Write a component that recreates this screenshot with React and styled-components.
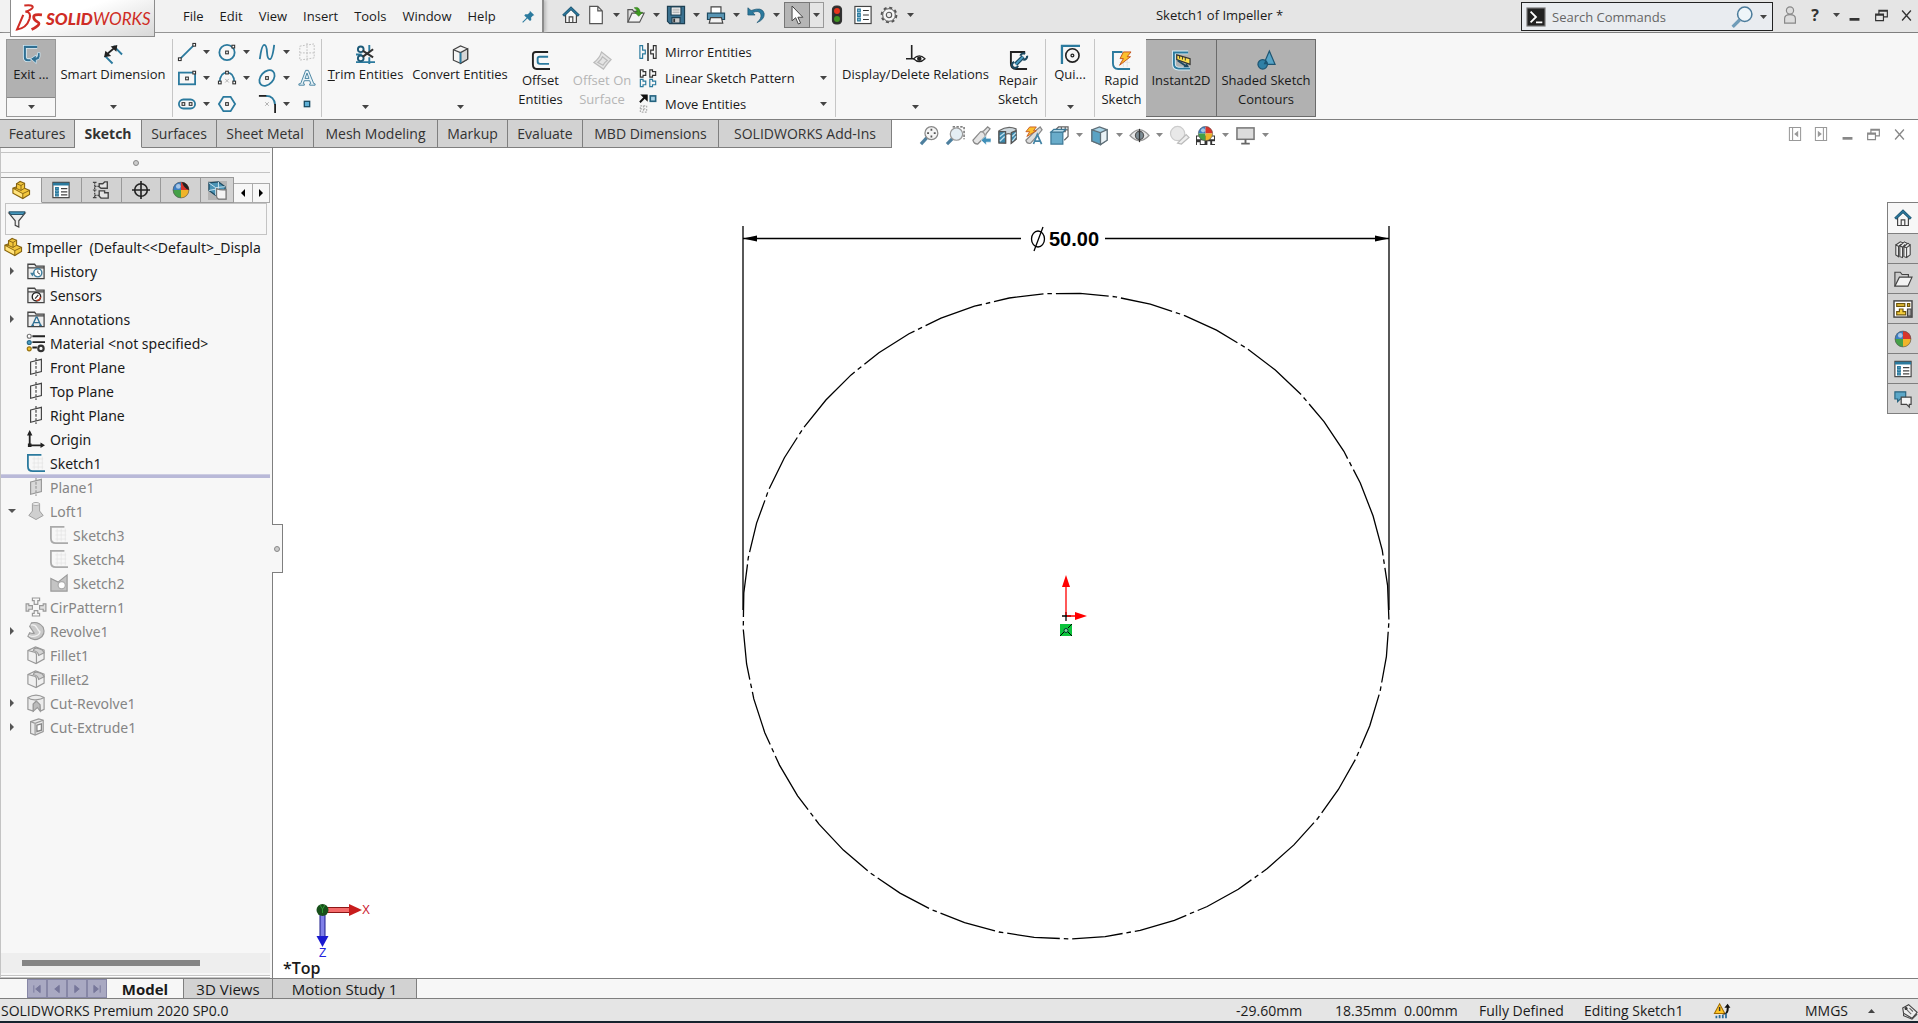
import React, { useState } from "react";
import styled, { createGlobalStyle, css } from "styled-components";

const GlobalStyle = createGlobalStyle`
  * { box-sizing: border-box; }
  body {
    margin: 0;
    background: #fff;
    color: #1a1a1a;
    font-family: "Open Sans", "Noto Sans", sans-serif;
    font-size: 14px;
  }
  button, input {
    font: inherit;
    color: inherit;
    margin: 0;
    padding: 0;
    border: 0;
    background: none;
  }
`;

const BLUE = "#2b7a9e";
const DARK = "#333";

/* ---------- icons ---------- */

const Svg = styled.svg`
    width: ${(p) => p.$w || 20}px;
    height: ${(p) => p.$h || p.$w || 20}px;
    flex: none;
    display: block;
    overflow: visible;
`;

const Icon = ({ w, h, children }) => (
    <Svg $w={w} $h={h} viewBox="0 0 20 20" fill="none" stroke={DARK} strokeWidth="1.3" aria-hidden="true">
        {children}
    </Svg>
);

const Caret = ({ color = "#444", up }) => (
    <Svg $w={7} $h={4} viewBox="0 0 7 4" aria-hidden="true">
        <path d={up ? "M0 4h7L3.5 0z" : "M0 0h7L3.5 4z"} fill={color} />
    </Svg>
);

const Dot = ({ x, y, c = DARK, f = "#fff" }) => (
    <rect x={x - 1.5} y={y - 1.5} width="3" height="3" fill={f} stroke={c} strokeWidth="1.2" />
);

const Globe = () => (
    <>
        <path d="M10 1a9 9 0 0 0-9 9h9z" fill="#3c7fc4" stroke="none" />
        <path d="M10 1a9 9 0 0 1 9 9h-9z" fill="#d8342b" stroke="none" />
        <path d="M1 10a9 9 0 0 0 9 9v-9z" fill="#45a047" stroke="none" />
        <path d="M19 10a9 9 0 0 1-9 9v-9z" fill="#f0b429" stroke="none" />
        <circle cx="7" cy="6" r="2.6" fill="#fff" opacity=".55" stroke="none" />
        <circle cx="10" cy="10" r="8.8" stroke="#555" strokeWidth=".7" />
    </>
);

const House = () => (
    <>
        <path d="M4 9v9.3h12V9L10 3.500z" fill="#f7f7f7" stroke="#444" />
        <path d="M8 18v-6h4v6" stroke="#444" />
        <path d="M1.300 10.800L10 2.500l8.700 8.300" stroke="#1f5673" strokeWidth="3.200" />
        <path d="M1.800 10.200L10 2.600l8.200 7.600" stroke={BLUE} strokeWidth="1.400" />
    </>
);

const Listing = () => (
    <>
        <rect x="1" y="1.500" width="18" height="17" fill="#fff" stroke="#444" />
        <path d="M1 3.500h18" stroke={BLUE} strokeWidth="3" />
        <path d="M10 8.500h7M10 12h7M10 15.500h7" stroke="#444" />
        <path d="M4 7.300h3v2H4zM4 11h3v2H4zM4 14.500h3v2H4z" fill="#8cc4de" stroke={BLUE} />
    </>
);

const PartIcon = () => (
    <>
        <path d="M1 8l4-1.500V3l4-2.500 5 2v5.500l5.500 2.500V15l-7.500 4.500L1 13.500z" fill="#f3c73c" stroke="#856312" strokeWidth="1.200" />
        <path d="M2 9.300l9.300 5v3.700L2 13z" fill="#ffe37f" stroke="none" />
        <path d="M5 3l5 2v5.500L5 8.300zM1 8l4 .3M10 5l4-2.500M10 10.500l4-2.500M1 8l11 6 7.500-3.500M12 14v5" stroke="#856312" strokeWidth="1" />
    </>
);

const Cube = ({ c = "#444", a = "#f4f4f4", b = "#d6d6d6" }) => (
    <>
        <path d="M2.500 5L10 1l7.500 3v11L10 19.300 2.500 16z" fill={a} stroke={c} />
        <path d="M10 8l7.500-4v11L10 19.300z" fill={b} stroke={c} />
        <path d="M2.500 5L10 8" stroke={c} />
    </>
);

const FolderBase = () => (
    <path d="M1 4V2.500h7.500l1.500 2h9V18.500H1z M1 6.500h18" fill="#ededed" stroke="#444" strokeWidth="1.400" />
);

const PlaneShape = ({ c = "#444", f = "none" }) => (
    <>
        <path d="M4 4.500L16 1.500v13.500L4 18z" fill={f} stroke={c} />
        <path d="M10 0v20" stroke={c} strokeDasharray="3 1.500" />
    </>
);

const SketchShape = ({ c = BLUE }) => (
    <>
        <path d="M6 5.500h12M6 10h12M6 14.500h12M8 3v14M12.500 3v14M17 3v14" stroke="#e2e2e2" strokeWidth=".7" />
        <path d="M16 1H1v12.500Q1 19 6.500 19H20" stroke={c} strokeWidth="2" />
    </>
);

const FilletShape = () => (
    <>
        <path d="M1 5l8.500-4 9.500 3.500v10l-9 5-9-4z" fill="#f0f0f0" stroke="#999" />
        <path d="M8 3q3-2 9 1.500l2 3-6 3Q12 5.500 7 5.300z" fill="#d4d4d4" stroke="#999" />
        <path d="M1 5l6 1.500q4 .5 3.500 4.500v8.500" stroke="#999" />
    </>
);

const icons = {
    home: <House />,
    page: <path d="M3 .5h9l5 5v14H3zM12 .5v5h5" fill="#fff" stroke="#555" />,
    open: (
        <>
            <path d="M1 18V4h5l1.500 2H14v3" fill="#ddd" stroke="#555" />
            <path d="M1 18L5.500 8H19l-5 10z" fill="#f3f3f3" stroke="#555" />
            <path d="M8 2q6-2 6.500 5h3L13 11.500 8.500 7h3Q11 3.500 8 2z" fill="#3d9c1f" stroke="#2c7514" strokeWidth=".6" />
        </>
    ),
    save: (
        <>
            <path d="M.5 .5h19v19H3L.5 17z" fill="#3a7190" stroke="#1d3f52" />
            <path d="M4.500 1h11v9h-11z" fill="#fff" stroke="#1d3f52" />
            <path d="M6 3.500h8M6 5.500h8M6 7.500h8" stroke="#999" strokeWidth="1" />
            <path d="M5.500 13h9v6h-9z" fill="#ccc" stroke="#1d3f52" />
            <path d="M8 14v4" strokeWidth="2" />
        </>
    ),
    print: (
        <>
            <path d="M4.500 8V1h11v7" fill="#fff" stroke="#444" />
            <path d="M.5 8h19v7H.5z" fill="#5795b4" stroke="#1d4a61" />
            <path d="M4 13h12l1.500 6h-15z" fill="#f4f4f4" stroke="#444" />
        </>
    ),
    undo: <path d="M1 2v8h8L6.300 7.300q7-3 9 1.500 1.500 5-4.300 9.700 9-3.500 8-10.500Q17 .5 4.500 5z" fill={BLUE} stroke="#1f5673" strokeWidth=".8" />,
    cursor: <path d="M4.500 0v16.500L8.500 13l3 7 2.500-1-3-6.500h5.500z" fill="#fff" stroke="#444" strokeWidth="1.100" />,
    traffic: (
        <>
            <rect x="5" y="0" width="10" height="20" rx="4" fill="#2e2e2e" />
            <circle cx="10" cy="5.500" r="3.300" fill="#e8341c" stroke="none" />
            <circle cx="10" cy="14.500" r="3.300" fill="#3f9422" stroke="none" />
        </>
    ),
    options: (
        <>
            <rect x="1" y=".5" width="18" height="19" fill="#fff" stroke="#444" />
            <path d="M4 3.500h3v3H4zM4 8.500h3v3H4zM4 13.500h3v3H4z" fill="#8cc4de" stroke={BLUE} strokeWidth="1.200" />
            <path d="M10 5h6.500M10 10h6.500M10 15h6.500" />
        </>
    ),
    gear: (
        <>
            <circle cx="10" cy="10" r="8.200" stroke="#555" strokeWidth="2.200" strokeDasharray="3.400 3.040" />
            <circle cx="10" cy="10" r="7" fill="#f7f7f7" stroke="#555" strokeWidth="1.100" />
            <circle cx="10" cy="10" r="3" fill="#eee" stroke="#555" strokeWidth="1.200" />
        </>
    ),
    pin: (
        <>
            <path d="M12 1l7 7-2 .5-3 3 .3 4-2 1.500L3.500 8.500 5 6.500l4 .2 3-3.200z" fill={BLUE} stroke="none" />
            <path d="M8 12l-7 7" stroke={BLUE} strokeWidth="1.600" />
        </>
    ),
    exit: (
        <>
            <path d="M16 2H3v11q0 3 3 3h3" stroke="#d7edf7" strokeWidth="4" />
            <path d="M16 2H3v11q0 3 3 3h3" stroke="#2f6f92" strokeWidth="2.200" />
            <path d="M19 8v4q0 4-4 4v3.500L9 14.500l6-4V13q1.500 0 1.500-5z" fill="#2f6f92" stroke="#d7edf7" strokeWidth=".8" />
        </>
    ),
    smart: (
        <>
            <path d="M1 11.500l8 8M10 1l9 9" stroke={BLUE} strokeWidth="2" />
            <path d="M4 9l7-6" stroke="#222" strokeWidth="2" />
            <path d="M0 13l1.500-7 6 5.500zM14 0l-1 7-6-5.500z" fill="#222" stroke="none" />
        </>
    ),
    line: (
        <>
            <path d="M2 18L18 2" stroke={BLUE} strokeWidth="2" />
            <Dot x={2} y={18} />
            <Dot x={18} y={2} />
        </>
    ),
    circle: (
        <>
            <circle cx="10" cy="10.500" r="8.500" stroke={BLUE} strokeWidth="2" />
            <Dot x={10} y={10.5} />
            <Dot x={17} y={4} />
        </>
    ),
    spline: <path d="M2 18Q4 2 7 2q2.500 0 3 8t3 8Q16 18 18 2" stroke={BLUE} strokeWidth="2" />,
    gridplane: <path d="M2 3.500L18 1v15.500L2 19zM2 11h16M10 0v20" stroke="#bbb" strokeDasharray="2 1.500" strokeWidth="1" />,
    rect: (
        <>
            <rect x="1" y="4" width="18" height="13" stroke={BLUE} strokeWidth="2" />
            <Dot x={10} y={10.5} />
            <Dot x={18} y={4} />
        </>
    ),
    arc: (
        <>
            <path d="M2 15Q2 4 10 4t8 11" stroke={BLUE} strokeWidth="2" />
            <path d="M8 11l4 4M12 11l-4 4" stroke="#aaa" strokeWidth="1" />
            <Dot x={2} y={15} />
            <Dot x={10} y={4} />
            <Dot x={18} y={15} />
        </>
    ),
    ellipse: (
        <>
            <ellipse cx="10" cy="10" rx="10" ry="7" transform="rotate(-48 10 10)" stroke={BLUE} strokeWidth="2" />
            <Dot x={10} y={10} />
        </>
    ),
    text: <path d="M1 18h6v-1.500l-1.200-.3L7 13h6l1.200 3.200-1.200.3V18h6v-1.500l-1.500-.3L11.500 1.500h-3L3 16.200l-2 .3zM7.800 10.500h4.400L10 4.500z" fill="#e8f3f8" stroke="#4e88a4" strokeWidth="1.100" />,
    slot: (
        <>
            <rect x="1" y="5" width="18" height="10" rx="5" stroke={BLUE} strokeWidth="2" />
            <Dot x={6} y={10} />
            <Dot x={14} y={10} />
        </>
    ),
    polygon: (
        <>
            <path d="M6 2h8l5 8-5 8H6l-5-8z" stroke={BLUE} strokeWidth="2" />
            <Dot x={10} y={10} />
        </>
    ),
    fillet: (
        <>
            <path d="M1 1h9" stroke="#222" strokeWidth="2" />
            <path d="M9 1q9 0 10 10" stroke={BLUE} strokeWidth="2" />
            <path d="M19 10v10" stroke="#222" strokeWidth="2" />
            <path d="M8 8l4 4M12 8l-4 4" stroke="#aaa" strokeWidth="1" />
        </>
    ),
    point: <rect x="7" y="7" width="6" height="6" fill="#5fb0d6" stroke="#174961" strokeWidth="1.400" />,
    trim: (
        <>
            <path d="M0 10h6M14 0v7M14 13v7M0 18h20" stroke={BLUE} strokeWidth="2" />
            <circle cx="5" cy="4.500" r="3" stroke="#1d5a78" strokeWidth="2" />
            <circle cx="5" cy="14" r="3" stroke="#1d5a78" strokeWidth="2" />
            <path d="M7 6l11 7M7 12.500l11-8" stroke="#333" strokeWidth="2.200" />
        </>
    ),
    convert: (
        <>
            <Cube />
            <path d="M10 8v11" stroke={BLUE} strokeWidth="2" />
        </>
    ),
    offset: (
        <>
            <path d="M18 1H5Q2 1 2 4v10q0 5 4 5h14" stroke="#222" strokeWidth="2" />
            <path d="M18 6H9Q7 6 7 8v3q0 2.500 2.500 2.500H19" stroke={BLUE} strokeWidth="2" />
        </>
    ),
    offsetSurface: <path d="M1 12Q7 8 9 1l10 8q-3 3-8 10zM5 12q4-3 5-6l5 4q-3 2-4.500 5z" fill="#e4e4e4" stroke="#bbb" />,
    mirror: (
        <>
            <path d="M10 0v20" stroke="#222" strokeWidth="1.600" />
            <path d="M1 3h3v5h3v4H4v5H1z" stroke={BLUE} />
            <path d="M19 3h-3v5h-3v4h3v5h3z" />
        </>
    ),
    linear: (
        <>
            <path d="M1.500 1h3v2h3v4h-3v2h-3zM12 1h3v2h3.500v4H15v2h-3z" />
            <path d="M1.500 11.500h3v2h3v4h-3v2h-3z" stroke={BLUE} />
            <path d="M12 11.500h3v2h3.500v4H15v2h-3z" stroke={BLUE} />
        </>
    ),
    move: (
        <>
            <path d="M1 8l6-6" stroke="#111" strokeWidth="2.200" />
            <path d="M3 0h6v6z" fill="#111" stroke="#111" />
            <rect x="12.500" y="1" width="6" height="6" fill="#a9d3e6" stroke="#25637f" strokeWidth="1.800" />
            <path d="M1.500 12h7v7h-7zM1.500 15.500h7M5 12v7" stroke="#aaa" strokeDasharray="2 1.500" />
        </>
    ),
    relations: (
        <>
            <path d="M6 0v14M0 14.500h9" stroke="#222" strokeWidth="1.700" />
            <path d="M8 14.500q6-6 12 0-6 6-12 0z" fill="#fff" stroke="#222" strokeWidth="1.200" />
            <circle cx="14" cy="14.500" r="2.400" fill="#222" stroke="none" />
        </>
    ),
    repair: (
        <>
            <path d="M17 1H2v12q0 6 5.500 6H19" stroke="#222" strokeWidth="2" />
            <path d="M7 14l8-8" stroke="#1d4a61" strokeWidth="4.500" />
            <path d="M5.500 11.500a3.200 3.200 0 1 0 4 4M12 5a3.400 3.400 0 0 1 5-2M19 5a3.400 3.400 0 0 1-4 4" stroke="#1d4a61" strokeWidth="2.200" />
            <path d="M7 14l8-8" stroke="#4b9cc2" strokeWidth="2" />
        </>
    ),
    quick: (
        <>
            <path d="M1 20V1h19" stroke={BLUE} strokeWidth="2.400" />
            <circle cx="12" cy="11" r="7" stroke="#222" strokeWidth="1.700" />
            <circle cx="12" cy="11" r="1.500" stroke="#222" />
        </>
    ),
    rapid: (
        <>
            <path d="M11 7h8M8 12h11M12 3v14M16 3v14" stroke="#ddd" strokeWidth=".8" />
            <path d="M11 1H1v12q0 6 5.500 6H19" stroke={BLUE} strokeWidth="2" />
            <path d="M12 1h8l-4 5h3.500L8 15l4-7H8.500z" fill="#fbc02d" stroke="#c4521a" strokeWidth="1" />
        </>
    ),
    instant: (
        <>
            <path d="M17 1.500H2v12q0 5 5 5h12" stroke="#d7edf7" strokeWidth="4" />
            <path d="M17 1.500H2v12q0 5 5 5h12" stroke={BLUE} strokeWidth="2" />
            <path d="M5 4l14 4v6L5 9z" fill="#ffe14d" stroke="#333" />
            <path d="M8 5v3M11 6v3M14 7v3" stroke="#333" strokeWidth="1" />
            <path d="M6 10l9 6" stroke="#1d4a61" strokeWidth="1.800" />
            <path d="M18 17h-6l3.500-4z" fill="#1d4a61" stroke="none" />
        </>
    ),
    shaded: (
        <>
            <path d="M13 0l6 14H7z" fill="#56a3c6" stroke="#1f5673" />
            <circle cx="6" cy="14" r="5" fill="#2f80a6" stroke="#1f5673" />
            <path d="M9 9.500L7 14h4q0-3-2-4.500z" fill="#1b5674" stroke="none" />
        </>
    ),
    zoomFit: (
        <>
            <path d="M1 19l6-6.500" stroke="#4d7f9e" strokeWidth="3.400" />
            <circle cx="12" cy="7.500" r="6.800" fill="#f4f4f4" stroke="#888" />
            <path d="M12 3v2M12 10v2M7.500 7.500h2M14.500 7.500h2" stroke="#555" strokeWidth="1.800" />
        </>
    ),
    zoomArea: (
        <>
            <path d="M7 1h12v13" stroke="#555" strokeDasharray="2.500 1.500" />
            <path d="M1 19l6-6" stroke="#4d7f9e" strokeWidth="3.400" />
            <circle cx="11" cy="8.500" r="6.500" fill="#e4eef4" stroke="#999" />
        </>
    ),
    prevView: (
        <>
            <path d="M1 15l8-9 3-.5L16.500 1l2.500 2-4 5-1 3-8 8q-4 0-5-4z" fill="#e4e4e4" stroke="#888" />
            <path d="M9 6q4 0 5 5" stroke="#999" />
            <path d="M9.500 15l5.500-5v3h5v4h-5v3z" fill="#3f8fb8" stroke="#fff" strokeWidth=".6" />
        </>
    ),
    section: (
        <>
            <path d="M1 5q9-6 18-2v11l-5 4V9q-3-2-6 0v9l-7-1z" fill="#cfd8dd" stroke="#666" />
            <path d="M1 6h7v12H1zM14 7l5-2v9l-5 4z" fill="#3c87aa" stroke="#555" />
            <path d="M2 11l5-4M2 16l5-5M15 11l4-4M15 16l4-5" stroke="#bfe0ef" />
        </>
    ),
    dynamic: (
        <>
            <path d="M2 15l10-10 5-4 2 3-4 5-8 9q-4 1-5-3z" fill="#ddd" stroke="#888" />
            <path d="M6 1h7l-3 4h3L3 11l3-5H2z" fill="#fbc02d" stroke="#c4521a" strokeWidth=".9" />
            <path d="M10 19l4-10 4.500 10M11.500 16h5.500" stroke="#4585a6" strokeWidth="1.800" />
        </>
    ),
    orient: (
        <>
            <path d="M6 4l3-3h10v10l-4 4M6 6h10V1M12 1v6M16 4h3" stroke="#666" />
            <path d="M1 6.500h12.500V19H1z" fill="#69acca" stroke="#3c7896" />
            <path d="M1 6.500l3-3h12.500l-3 3z" fill="#b5d9e8" stroke="#3c7896" />
        </>
    ),
    display: (
        <>
            <path d="M2 4l8-3 8 3v11l-7 4.500L2 16z" fill="#a8d3e6" stroke="#5f6f78" />
            <path d="M11 7l7-3v11l-7 4.500z" fill="#e9f2f6" stroke="#5f6f78" />
            <path d="M2 4l9 3v12.500L2 16z" fill="#5ba3c4" stroke="#5f6f78" />
        </>
    ),
    hide: (
        <>
            <path d="M0 10q10-12 20 0-10 11-20 0z" fill="#e9e9e9" stroke="#999" />
            <circle cx="10" cy="10" r="4.300" fill="#7d8c94" stroke="#555" />
            <path d="M10 3v14" stroke="#333" />
        </>
    ),
    appearance: (
        <>
            <circle cx="8" cy="8" r="7.500" fill="#e8e8e8" stroke="#ccc" />
            <path d="M8 18l9-9 3 3-8 7z" fill="#eee" stroke="#bbb" />
        </>
    ),
    scene: (
        <>
            <path d="M0 10h20v10H0z" fill="#333" stroke="none" />
            <path d="M1 11h4v3H1zM15 11h4v3h-4zM5 15h4v4H5zM12 16h3v4h-3zM1 17h3v3H1zM17 16h3v3h-3z" fill="#fff" stroke="none" />
            <g transform="translate(1.500 -.5) scale(.85)">
                <Globe />
            </g>
        </>
    ),
    monitor: (
        <>
            <rect x="1" y="2" width="18" height="12" fill="#dcdcdc" stroke="#777" strokeWidth="1.600" />
            <path d="M10 14v4M5.500 18.500h9" stroke="#666" strokeWidth="2" />
        </>
    ),
    prevPane: (
        <>
            <path d="M3 2h14v16H3zM7 2v16" stroke="#999" />
            <path d="M14 6v8l-5-4z" fill="#999" stroke="none" />
        </>
    ),
    nextPane: (
        <>
            <path d="M3 2h14v16H3zM13 2v16" stroke="#999" />
            <path d="M6 6v8l5-4z" fill="#999" stroke="none" />
        </>
    ),
    minimize: <path d="M1 17h18" stroke="currentColor" strokeWidth="5" />,
    restore: <path d="M1 8h12v10H1zM1 9.500h12M6 7V2h13v10h-6M6 3.500h13" stroke="currentColor" strokeWidth="1.800" />,
    close: <path d="M2 1l16 18M18 1L2 19" stroke="currentColor" strokeWidth="2.400" />,
    command: (
        <>
            <rect x="0" y="0" width="20" height="20" fill="#222" stroke="#777" />
            <path d="M4 4l6 6-6 6M10 16h7" stroke="#fff" strokeWidth="2" />
        </>
    ),
    search: (
        <>
            <circle cx="12.500" cy="7.500" r="6.500" fill="#eef5f9" stroke="#4c7c9b" strokeWidth="1.400" />
            <path d="M8 12.500l-6.500 6.500" stroke="#6f9cb8" strokeWidth="3" />
        </>
    ),
    user: (
        <>
            <circle cx="10" cy="5" r="4" fill="#ddd" stroke="#888" />
            <path d="M4 19v-5q0-4.500 6-4.500t6 4.500v5z" fill="#ddd" stroke="#888" />
        </>
    ),
    part: <PartIcon />,
    props: <Listing />,
    config: (
        <>
            <path d="M3 1v18M3 6h5M3 16h5" stroke="#444" strokeWidth="1.400" strokeDasharray="2 1" />
            <path d="M8 3h4l2-2h3v7h-7l-2-1.500zM8 11h6v2h4v6h-8l-2-2z" fill="#e4e4e4" stroke="#444" strokeWidth="1.500" />
            <path d="M1 1.500h4M1 10h4M1 18.500h4" stroke="#444" />
        </>
    ),
    target: (
        <>
            <circle cx="10" cy="10" r="7" stroke="#222" strokeWidth="1.800" />
            <path d="M10 0v20M0 10h20" stroke="#222" strokeWidth="1.800" />
        </>
    ),
    globe: <Globe />,
    globePen: (
        <>
            <Globe />
            <path d="M11 1q7 1 8 9-6-2-8-9z" fill="#222" stroke="none" />
        </>
    ),
    dispPane: (
        <>
            <path d="M0 0h20v20H0z" fill="#b4b4b4" stroke="none" />
            <path d="M1 2l10-1 7 5v8L8 15 1 10z" fill="#4a93b5" stroke="#1d4a61" />
            <path d="M1 2l7 5 10-1M8 7v8M11 1v7L1 10M11 8l7 6" stroke="#cfe6f0" strokeWidth="1" />
            <path d="M9 8q5 2 10 1v10h-8q-2-1-2-3z" fill="#f4f4f4" stroke="#777" />
        </>
    ),
    filter: (
        <>
            <path d="M1 3.500h18L12 12v7l-4-2v-5z" fill="#eee" stroke="#444" />
            <path d="M1 2h18l-2 3H3z" fill="#4597bb" stroke="#1d4a61" strokeWidth="1" />
        </>
    ),
    history: (
        <>
            <FolderBase />
            <circle cx="12" cy="12" r="4.500" fill="#fff" stroke="#3f7e9e" strokeWidth="1.600" />
            <path d="M12 9.500V12l2.500 1.500" strokeWidth="1" />
            <path d="M3.500 12h5L6 16z" fill="#3f7e9e" stroke="none" />
        </>
    ),
    sensors: (
        <>
            <FolderBase />
            <circle cx="10.500" cy="12" r="4.700" fill="#fff" stroke="#222" strokeWidth="1.500" />
            <path d="M9 14l3.500-4" strokeWidth="1.300" />
            <path d="M10.500 16q4 0 4.500-4" stroke="#c33d20" strokeWidth="1.600" />
        </>
    ),
    annotations: (
        <>
            <FolderBase />
            <path d="M6 17l4.200-9h1l4 9M8 14h5.500M4.800 17h3M13.500 17h3" stroke="#2f6f92" strokeWidth="1.500" />
        </>
    ),
    material: (
        <>
            <path d="M6 2.500h14M6 9h14M6 15h5" stroke="#222" strokeWidth="2" />
            <circle cx="2.500" cy="2.500" r="2.200" fill="#fff" stroke="#777" />
            <circle cx="2.500" cy="9.500" r="2.200" fill="#4e9fc4" stroke="#2b6b8b" />
            <circle cx="2.500" cy="16.500" r="2.200" fill="#f0c22f" stroke="#9a7410" />
            <circle cx="15.500" cy="16" r="3" stroke="#333" strokeWidth="2.400" />
        </>
    ),
    plane: <PlaneShape />,
    origin: (
        <>
            <path d="M3 3v14h14" stroke="#222" strokeWidth="2" />
            <path d="M0 6l3-6 3 6zM15 14l5 3-5 3zM1 15h4v4H1z" fill="#222" stroke="none" />
        </>
    ),
    sketch: <SketchShape />,
    planeOff: <PlaneShape c="#999" f="#d9d9d9" />,
    loftOff: (
        <>
            <path d="M6 2q4-2.500 8 0v8l4 5-8 4.500L2 15l4-5z" fill="#cfcfcf" stroke="#999" strokeWidth="1" />
            <ellipse cx="10" cy="2.200" rx="4" ry="1.700" fill="#eee" stroke="#999" strokeWidth=".8" />
        </>
    ),
    sketchOff: <SketchShape c="#aaa" />,
    sketchFilled: (
        <>
            <path d="M1 5l8 4 10-8v18H1z" fill="#c4c4c4" stroke="#999" />
            <circle cx="13" cy="12.500" r="4" fill="#fff" stroke="#aaa" />
        </>
    ),
    circOff: (
        <>
            <path d="M6 0h8v3h-2v4H8V3H6zM6 20h8v-3h-2v-3H8v3H6z" stroke="#999" />
            <path d="M-1 6.500h3v2h4v4H2v2h-3zM21 6.500h-3v2h-4v4h4v2h3z" fill="#e0e0e0" stroke="#999" />
        </>
    ),
    revolveOff: (
        <>
            <path d="M5 1q8-2 13 5 3 8-4 12-7 4-13-2l2-4q3 1 5 .500L3 5z" fill="#c9c9c9" stroke="#999" />
            <path d="M4 3.500q5-1 7 3t4 5M2 15q5 2 9 0t3-5" stroke="#f0f0f0" strokeWidth="1.400" />
        </>
    ),
    filletOff: <FilletShape />,
    cutRevOff: (
        <>
            <path d="M1 4q9-5.500 18 0v13l-4 2-1-7-4-4-3 3v8l-6-2z" fill="#ececec" stroke="#999" />
            <path d="M7 19v-8l3.500-3 4 4v7l-3-4z" fill="#bbb" stroke="#999" />
            <path d="M1 4q3 3 9 2.500T19 4" stroke="#999" />
        </>
    ),
    cutExtOff: (
        <>
            <path d="M4 4l9-3 5 1.500V15l-9 4-5-2z" fill="#eaeaea" stroke="#999" />
            <path d="M4 4l5 2 9-3.500M9 6v13" stroke="#999" />
            <path d="M11 8l5-1.500v7L11 15z" fill="#fff" stroke="#888" strokeWidth="1.500" />
        </>
    ),
    library: (
        <>
            <path d="M2 6l5-4 5-1 6 3v12l-6 4-5-1-5-3z" fill="#f0f0f0" stroke="none" />
            <path d="M2 5.500l3 1.500v11.500l-3-2zM6.500 6.500l3 1.500v11.500l-3-1zM11 7.500l3 1v11l-3-1zM14 8.500l4-3v11l-4 3M2 5.500L7 2l3 1M6.500 6.500L11.500 2l3 1.500M11 7.500L15.500 3.500l2.500 2M5 7l3-2.500M9.500 8l3-3" stroke="#444" strokeWidth="1.200" />
        </>
    ),
    folder: (
        <>
            <path d="M1 18V2.500h6l2 2.500h7v3" fill="#ccc" stroke="#444" />
            <path d="M1 18L6 8h14l-4.500 10z" fill="#f3f3f3" stroke="#444" />
        </>
    ),
    palette: (
        <>
            <rect x="0" y="1" width="20" height="18" fill="#fff" stroke="#444" strokeWidth="1.600" />
            <path d="M3 4h9v3H3zM15 4h2.500v3H15zM6 10h4v3h3v3.500H3V13h3z" fill="#f4cd3c" stroke="#6e560c" />
            <path d="M15 10h4v8h-4z" fill="#aaa" stroke="#444" />
        </>
    ),
    forum: (
        <>
            <path d="M1 2h12v8H7l-3 3v-3H1z" fill="#5ba7c8" stroke="#2a6580" />
            <path d="M8 8h11v8h-2v3l-3-3H8z" fill="#f5f5f5" stroke="#444" />
        </>
    ),
    warn: (
        <>
            <path d="M7 1l6.500 12H.5z" fill="#ffc629" stroke="#a06c00" />
            <path d="M7 5v5" strokeWidth="1.800" />
            <path d="M10 14q6 0 6-8h-3l4-5 3.500 5h-2q0 10-8.500 8z" fill="#111" stroke="none" />
            <path d="M3 19v-3M7 19v-4M11 19v-4M15 19v-6" stroke="#2b6b9a" strokeWidth="2.200" />
        </>
    ),
    tag: (
        <>
            <path d="M2 6l7-4 10 9-6 7-10-6z" fill="#eee" stroke="#444" />
            <path d="M3 12v3l10 4 6-6" stroke="#444" />
            <path d="M7 8l5 5M10 6l4 4" stroke="#666" />
            <circle cx="6" cy="6.500" r="1.200" fill="#444" />
        </>
    ),
};

const Glyph = ({ name, w }) => <Icon w={w}>{icons[name]}</Icon>;

/* ---------- header ---------- */

const Page = styled.div`
    min-height: 100vh;
    display: flex;
    flex-direction: column;
`;

const Header = styled.header`
    display: flex;
    height: 33px;
    background: #e5e5e5;
    border-bottom: 1px solid #7f7f7f;
    font-size: 13px;
`;

const MenuArea = styled.div`
    display: flex;
    align-items: center;
    width: 544px;
    padding-left: 10px;
    background: #f2f2f2;
    border-right: 2px solid #8c8c8c;
    box-shadow: 2px 0 3px #bbb;
`;

const Logo = styled.div`
    position: relative;
    z-index: 2;
    align-self: flex-start;
    display: flex;
    align-items: center;
    gap: 3px;
    width: 145px;
    height: 37px;
    padding-left: 5px;
    border: 1px solid #8c8c8c;
    border-top: 0;
    background: linear-gradient(160deg, #fff 40%, #d8d8d8);
    color: #cf2c25;
    font-family: Lato, "Open Sans", sans-serif;
    font-style: italic;
    font-size: 17px;
    b { font-weight: 900; }
`;

const Menu = styled.nav`
    display: flex;
    flex: 1;
    margin-left: 20px;
`;

const MenuItem = styled.button`
    padding: 0 8px;
    line-height: 28px;
`;

const QuickBar = styled.div`
    display: flex;
    align-items: center;
    margin: 0 0 2px 14px;
`;

const ToolButton = styled.button`
    display: flex;
    align-items: center;
    justify-content: center;
    width: ${(p) => p.$w || 24}px;
    height: 26px;
    ${(p) => p.$pressed && css`
        background: #b5b5b5;
        border: 1px solid #777;
    `}
    ${(p) => p.$outlined && css`
        border: 1px solid #999;
        border-left: 0;
    `}
`;

const Title = styled.div`
    flex: 1;
    text-align: center;
    line-height: 30px;
`;

const SearchBox = styled.div`
    display: flex;
    align-items: center;
    gap: 7px;
    width: 252px;
    height: 29px;
    margin: 2px 8px 0 0;
    padding: 0 5px;
    border: 1px solid #222;
    background: #e9ecf0;
`;

const SearchInput = styled.input`
    flex: 1;
    min-width: 0;
    outline: 0;
    &::placeholder { color: #666; opacity: 1; }
`;

const WindowButtons = styled.div`
    display: flex;
    align-items: center;
    margin-bottom: 2px;
    color: #333;
    b { font-size: 16px; }
`;

const quickTools = [
    { icon: "home", label: "Home", w: 26 },
    { icon: "page", label: "New", caret: true },
    { icon: "open", label: "Open", caret: true },
    { icon: "save", label: "Save", caret: true },
    { icon: "print", label: "Print", caret: true },
    { icon: "undo", label: "Undo", caret: true },
    { icon: "cursor", label: "Select", caret: true, pressed: true, w: 26 },
    { icon: "traffic", label: "Rebuild", w: 26 },
    { icon: "options", label: "File properties", w: 26 },
    { icon: "gear", label: "Options", caret: true, w: 26 },
];

const TopBar = () => {
    const [query, setQuery] = useState("");

    return (
        <Header>
            <MenuArea>
                <Logo>
                    <Svg $w={27} $h={28} viewBox="0 0 26 26" fill="none" stroke="#cf2c25" strokeWidth="2" aria-hidden="true">
                        <path d="M8 1q9-1 8 2-1 2-7 4M9 7q6 0 4 7Q10 23 1 24l6-14" />
                        <path d="M25 10q-8-1-8 2t4 5-6 7" strokeWidth="2.600" />
                    </Svg>
                    <span><b>SOLID</b>WORKS</span>
                </Logo>
                <Menu>
                    {["File", "Edit", "View", "Insert", "Tools", "Window", "Help"].map((m) => (
                        <MenuItem key={m}>{m}</MenuItem>
                    ))}
                </Menu>
                <ToolButton $w={28} aria-label="Pin menu"><Glyph name="pin" w={13} /></ToolButton>
            </MenuArea>
            <QuickBar>
                {quickTools.map((t) => (
                    <React.Fragment key={t.icon}>
                        <ToolButton $w={t.w} $pressed={t.pressed} aria-label={t.label}>
                            <Glyph name={t.icon} w={18} />
                        </ToolButton>
                        {t.caret && (
                            <ToolButton $w={t.pressed ? 14 : 16} $outlined={t.pressed} aria-label={t.label + " menu"}>
                                <Caret />
                            </ToolButton>
                        )}
                    </React.Fragment>
                ))}
            </QuickBar>
            <Title>Sketch1 of Impeller *</Title>
            <SearchBox>
                <Glyph name="command" w={18} />
                <SearchInput
                    type="text"
                    aria-label="Search Commands"
                    placeholder="Search Commands"
                    value={query}
                    onChange={(e) => setQuery(e.target.value)}
                />
                <Glyph name="search" w={22} />
                <Caret />
            </SearchBox>
            <WindowButtons>
                <ToolButton $w={18} aria-label="Sign in"><Glyph name="user" w={18} /></ToolButton>
                <ToolButton $w={32} aria-label="Help"><b>?</b></ToolButton>
                <ToolButton $w={10} aria-label="Help menu"><Caret /></ToolButton>
                <ToolButton $w={26} aria-label="Minimize"><Glyph name="minimize" w={11} /></ToolButton>
                <ToolButton $w={28} aria-label="Restore"><Glyph name="restore" w={13} /></ToolButton>
                <ToolButton $w={23} aria-label="Close"><Glyph name="close" w={11} /></ToolButton>
            </WindowButtons>
        </Header>
    );
};

/* ---------- ribbon ---------- */

const Ribbon = styled.div`
    display: flex;
    height: 87px;
    padding: 6px;
    padding-bottom: 2px;
    background: #f7f7f7;
    border-bottom: 1px solid #7f7f7f;
    font-size: 13px;
`;

const RibbonButton = styled.button`
    display: flex;
    flex-direction: column;
    align-items: center;
    width: ${(p) => p.$w}px;
    height: 78px;
    padding-top: ${(p) => (p.$two ? 12 : 6)}px;
    line-height: 19px;
    color: ${(p) => (p.disabled ? "#b5b5b5" : "#1a1a1a")};
    span {
        margin-top: 1px;
        white-space: nowrap;
    }
    ${(p) => p.$active && css`
        background: #b1b1b1;
        border: 1px solid #6b6b6b;
        padding-top: 11px;
        & + & { border-left: 0; }
    `}
`;

const CaretSlot = styled.i`
    display: flex;
    align-items: center;
    flex: 1;
    padding-top: 12px;
`;

const ExitGroup = styled.div`
    width: 50px;
    height: 78px;
    display: flex;
    flex-direction: column;
    border: 1px solid #999;
`;

const ExitButton = styled.button`
    flex: 1;
    display: flex;
    flex-direction: column;
    align-items: center;
    padding-top: 5px;
    line-height: 19px;
    background: #b1b1b1;
    span { margin-top: 1px; }
`;

const ExitCaret = styled.button`
    display: flex;
    align-items: center;
    justify-content: center;
    height: 19px;
    border-top: 1px solid #888;
`;

const Divider = styled.div`
    width: 1px;
    height: 78px;
    margin: 0 2px;
    background: #c6c6c6;
`;

const SketchGrid = styled.div`
    display: grid;
    grid-template-columns: 40px 40px 40px 24px;
    grid-auto-rows: 26px;
`;

const SketchCell = styled.div`
    display: flex;
`;

const RowTools = styled.div`
    display: flex;
    flex-direction: column;
    width: 197px;
`;

const RowTool = styled.div`
    display: flex;
    align-items: center;
    height: 26px;
`;

const RowButton = styled.button`
    display: flex;
    align-items: center;
    gap: 8px;
    flex: 1;
    padding-left: 3px;
`;

const sketchTools = [
    ["line", "Line", true], ["circle", "Circle", true], ["spline", "Spline", true], ["gridplane", "Plane"],
    ["rect", "Rectangle", true], ["arc", "Arc", true], ["ellipse", "Ellipse", true], ["text", "Text"],
    ["slot", "Slot", true], ["polygon", "Polygon"], ["fillet", "Fillet", true], ["point", "Point"],
];

const BigTool = ({ icon, w, children, two, caret, ...rest }) => (
    <RibbonButton $w={w} $two={two} {...rest}>
        <Glyph name={icon} w={19} />
        <span>{children}</span>
        {caret && <CaretSlot><Caret /></CaretSlot>}
    </RibbonButton>
);

const CommandManager = () => (
    <Ribbon>
        <ExitGroup>
            <ExitButton><Glyph name="exit" w={19} /><span>Exit ...</span></ExitButton>
            <ExitCaret aria-label="Exit menu"><Caret /></ExitCaret>
        </ExitGroup>
        <BigTool icon="smart" w={114} caret>Smart Dimension</BigTool>
        <Divider />
        <SketchGrid>
            {sketchTools.map(([icon, label, caret]) => (
                <SketchCell key={icon}>
                    <ToolButton aria-label={label}><Glyph name={icon} w={18} /></ToolButton>
                    {caret && <ToolButton $w={15} aria-label={label + " menu"}><Caret /></ToolButton>}
                </SketchCell>
            ))}
        </SketchGrid>
        <Divider />
        <BigTool icon="trim" w={83} caret><u>T</u>rim Entities</BigTool>
        <BigTool icon="convert" w={106} caret>Convert Entities</BigTool>
        <BigTool icon="offset" w={55} two>Offset<br />Entities</BigTool>
        <BigTool icon="offsetSurface" w={68} two disabled>Offset On<br />Surface</BigTool>
        <RowTools>
            <RowTool><RowButton><Glyph name="mirror" w={18} />Mirror Entities</RowButton></RowTool>
            <RowTool>
                <RowButton><Glyph name="linear" w={18} />Linear Sketch Pattern</RowButton>
                <ToolButton $w={20} aria-label="Pattern menu"><Caret /></ToolButton>
            </RowTool>
            <RowTool>
                <RowButton><Glyph name="move" w={18} />Move Entities</RowButton>
                <ToolButton $w={20} aria-label="Move menu"><Caret /></ToolButton>
            </RowTool>
        </RowTools>
        <Divider />
        <BigTool icon="relations" w={155} caret>Display/Delete Relations</BigTool>
        <BigTool icon="repair" w={50} two>Repair<br />Sketch</BigTool>
        <Divider />
        <BigTool icon="quick" w={44} caret>Qui...</BigTool>
        <Divider />
        <BigTool icon="rapid" w={49} two>Rapid<br />Sketch</BigTool>
        <BigTool icon="instant" w={71} two $active>Instant2D</BigTool>
        <BigTool icon="shaded" w={99} two $active>Shaded Sketch<br />Contours</BigTool>
    </Ribbon>
);

/* ---------- tabs and view toolbar ---------- */

const TabStrip = styled.div`
    display: flex;
    align-items: center;
    height: 28px;
`;

const Tab = styled.button`
    align-self: stretch;
    width: ${(p) => p.$w}px;
    line-height: 24px;
    white-space: nowrap;
    color: #333;
    background: ${(p) => (p.$on ? "#f7f7f7" : "#d2d2d2")};
    font-weight: ${(p) => (p.$on ? 700 : 400)};
    border-right: 1px solid #7f7f7f;
    border-bottom: 1px solid ${(p) => (p.$on ? "#f7f7f7" : "#7f7f7f")};
    ${(p) => p.$bottom && css`
        font-size: 15px;
        line-height: 18px;
        color: #1a1a1a;
        border-bottom: 0;
    `}
`;

const ViewTools = styled.div`
    display: flex;
    align-items: center;
    flex: 1;
    margin: 2px 0 0 24px;
`;

const PaneButtons = styled.div`
    display: flex;
    color: #888;
    margin-right: 6px;
`;

const tabs = [
    ["Features", 75], ["Sketch", 67], ["Surfaces", 75], ["Sheet Metal", 97], ["Mesh Modeling", 124],
    ["Markup", 70], ["Evaluate", 75], ["MBD Dimensions", 136], ["SOLIDWORKS Add-Ins", 173],
];

const viewTools = [
    ["zoomFit", "Zoom to fit"], ["zoomArea", "Zoom to area"], ["prevView", "Previous view"], ["section", "Section view"],
    ["dynamic", "Annotation views"], ["orient", "View orientation", true], ["display", "Display style", true],
    ["hide", "Hide or show items", true], ["appearance", "Edit appearance"], ["scene", "Apply scene", true],
    ["monitor", "View settings", true],
];

const Tabs = () => (
    <TabStrip>
        {tabs.map(([name, w]) => (
            <Tab key={name} $w={w} $on={name === "Sketch"}>{name}</Tab>
        ))}
        <ViewTools>
            {viewTools.map(([icon, label, caret]) => (
                <React.Fragment key={icon}>
                    <ToolButton $w={26} aria-label={label}><Glyph name={icon} w={19} /></ToolButton>
                    {caret && <ToolButton $w={14} aria-label={label + " menu"}><Caret color="#888" /></ToolButton>}
                </React.Fragment>
            ))}
        </ViewTools>
        <PaneButtons>
            <ToolButton $w={26} aria-label="Previous pane"><Glyph name="prevPane" w={16} /></ToolButton>
            <ToolButton $w={26} aria-label="Next pane"><Glyph name="nextPane" w={16} /></ToolButton>
            <ToolButton $w={26} aria-label="Minimize document"><Glyph name="minimize" w={11} /></ToolButton>
            <ToolButton $w={26} aria-label="Restore document"><Glyph name="restore" w={13} /></ToolButton>
            <ToolButton $w={26} aria-label="Close document"><Glyph name="close" w={11} /></ToolButton>
        </PaneButtons>
    </TabStrip>
);

/* ---------- feature tree ---------- */

const Workspace = styled.div`
    flex: 1;
    display: flex;
    min-height: 0;
`;

const SidePanel = styled.aside`
    position: relative;
    display: flex;
    flex-direction: column;
    width: 273px;
    padding-right: 2px;
    background: #f7f7f7;
    border-left: 1px solid #c4c4c4;
    border-right: 1px solid #7f7f7f;
`;

const Grip = styled.div`
    display: flex;
    align-items: center;
    justify-content: center;
    height: 21px;
    margin-top: 4px;
    border-top: 1px solid #c4c4c4;
    border-bottom: 1px solid #c4c4c4;
`;

const GripDot = styled.span`
    width: 6px;
    height: 6px;
    border: 1px solid #888;
    border-radius: 50%;
    background: #ccc;
`;

const PanelTabs = styled.div`
    display: flex;
    height: 26px;
    margin-top: 4px;
    overflow: hidden;
`;

const PanelTab = styled.button`
    display: flex;
    align-items: center;
    justify-content: center;
    width: ${(p) => p.$w || 40}px;
    background: ${(p) => (p.$on ? "#f7f7f7" : "#d2d2d2")};
    border: 1px solid #999;
    border-left: 0;
    ${(p) => p.$on && css`border-bottom-color: #f7f7f7;`}
`;

const ScrollButton = styled.button`
    display: flex;
    align-items: center;
    justify-content: center;
    align-self: flex-end;
    width: ${(p) => p.$w}px;
    height: 20px;
    background: #f7f7f7;
    border: 1px solid #aaa;
    border-left: 0;
`;

const FilterBox = styled.label`
    display: flex;
    align-items: center;
    height: 32px;
    margin: 0 3px 0 4px;
    padding-left: 2px;
    border: 1px solid #c4c4c4;
    input {
        flex: 1;
        min-width: 0;
        outline: 0;
    }
`;

const Tree = styled.ul`
    flex: 1;
    list-style: none;
    margin: 0;
    padding: 0;
    overflow: hidden;
    font-family: "Noto Sans", "Open Sans", sans-serif;
`;

const TreeRow = styled.li`
    display: flex;
    align-items: center;
    gap: 5px;
    height: 24px;
    padding-left: ${(p) => [3, 6, 29][p.$level]}px;
    white-space: pre;
    color: ${(p) => (p.$off ? "#858585" : "#1a1a1a")};
`;

const Toggle = styled.button`
    display: flex;
    align-items: center;
    justify-content: center;
    width: 10px;
    height: 16px;
    margin-right: 5px;
`;

const Rollback = styled.li`
    height: 4px;
    margin: -1px 0 -3px;
    background: #b9b9d8;
    border-top: 1px solid #cdcde2;
`;

const ScrollTrack = styled.div`
    height: 20px;
    padding: 7px 0 7px 21px;
    margin-bottom: 2px;
    background: #eeeeee;
`;

const ScrollThumb = styled.div`
    width: 178px;
    height: 6px;
    background: #858585;
`;

const PanelFoot = styled.div`
    height: 3px;
    border-top: 1px solid #c4c4c4;
    border-bottom: 1px solid #c4c4c4;
    background: #fff;
`;

/* handle that hangs off the right edge of the panel */
const Handle = styled.button`
    position: absolute;
    left: 100%;
    top: 376px;
    z-index: 1;
    display: flex;
    align-items: center;
    justify-content: center;
    width: 11px;
    height: 49px;
    background: #f7f7f7;
    border: 1px solid #7f7f7f;
    border-left: 0;
`;

const features = [
    { name: "History", icon: "history", open: false },
    { name: "Sensors", icon: "sensors" },
    { name: "Annotations", icon: "annotations", open: false },
    { name: "Material <not specified>", icon: "material" },
    { name: "Front Plane", icon: "plane" },
    { name: "Top Plane", icon: "plane" },
    { name: "Right Plane", icon: "plane" },
    { name: "Origin", icon: "origin" },
    { name: "Sketch1", icon: "sketch" },
    { rollback: true },
    { name: "Plane1", icon: "planeOff", off: true },
    { name: "Loft1", icon: "loftOff", off: true, open: true },
    { name: "Sketch3", icon: "sketchOff", off: true, level: 2 },
    { name: "Sketch4", icon: "sketchOff", off: true, level: 2 },
    { name: "Sketch2", icon: "sketchFilled", off: true, level: 2 },
    { name: "CirPattern1", icon: "circOff", off: true },
    { name: "Revolve1", icon: "revolveOff", off: true, open: false },
    { name: "Fillet1", icon: "filletOff", off: true },
    { name: "Fillet2", icon: "filletOff", off: true },
    { name: "Cut-Revolve1", icon: "cutRevOff", off: true, open: false },
    { name: "Cut-Extrude1", icon: "cutExtOff", off: true, open: false },
];

const Arrow = ({ open }) => (
    <Svg $w={8} $h={8} viewBox="0 0 8 8" fill="#555" aria-hidden="true">
        <path d={open ? "M0 2h8L4 6z" : "M2 0l4 4-4 4z"} />
    </Svg>
);

const FeatureTree = () => {
    const [filter, setFilter] = useState("");

    return (
        <SidePanel>
            <Grip><GripDot /></Grip>
            <PanelTabs>
                <PanelTab $w={41} $on aria-label="Feature tree"><Glyph name="part" w={18} /></PanelTab>
                <PanelTab aria-label="Properties"><Glyph name="props" w={18} /></PanelTab>
                <PanelTab aria-label="Configurations"><Glyph name="config" w={18} /></PanelTab>
                <PanelTab aria-label="Dimensions"><Glyph name="target" w={18} /></PanelTab>
                <PanelTab aria-label="Appearances"><Glyph name="globePen" w={18} /></PanelTab>
                <PanelTab $w={33} aria-label="Display pane"><Glyph name="dispPane" w={19} /></PanelTab>
                <ScrollButton $w={19} aria-label="Scroll left">
                    <Svg $w={4} $h={8} viewBox="0 0 4 8"><path d="M4 0v8L0 4z" /></Svg>
                </ScrollButton>
                <ScrollButton $w={17} aria-label="Scroll right">
                    <Svg $w={4} $h={8} viewBox="0 0 4 8"><path d="M0 0v8l4-4z" /></Svg>
                </ScrollButton>
            </PanelTabs>
            <FilterBox>
                <Glyph name="filter" w={18} />
                <input type="text" aria-label="Filter" value={filter} onChange={(e) => setFilter(e.target.value)} />
            </FilterBox>
            <Tree>
                <TreeRow $level={0}>
                    <Glyph name="part" w={18} />{"Impeller  (Default<<Default>_Displa"}
                </TreeRow>
                {features.map((f) =>
                    f.rollback ? (
                        <Rollback key="rollback" />
                    ) : (
                        <TreeRow key={f.name} $level={f.level || 1} $off={f.off}>
                            <Toggle as={f.open === undefined ? "span" : "button"} aria-label={f.open === undefined ? undefined : f.name}>
                                {f.open !== undefined && <Arrow open={f.open} />}
                            </Toggle>
                            <Glyph name={f.icon} w={18} />
                            {f.name}
                        </TreeRow>
                    )
                )}
            </Tree>
            <ScrollTrack><ScrollThumb /></ScrollTrack>
            <PanelFoot />
            <Handle aria-label="Collapse panel"><GripDot /></Handle>
        </SidePanel>
    );
};

/* ---------- graphics area ---------- */

const Viewport = styled.main`
    position: relative;
    flex: 1;
    display: flex;
    justify-content: center;
    align-items: flex-start;
    padding: 67px 59px 0 0;
    background: #fff;
`;

const Triad = styled.div`
    position: absolute;
    left: 10px;
    bottom: 0;
    display: flex;
    flex-direction: column;
`;

const ViewName = styled.span`
    font-size: 16px;
    font-weight: 600;
    line-height: 20px;
`;

const TaskPane = styled.div`
    position: absolute;
    right: 0;
    top: 54px;
    display: flex;
    flex-direction: column;
    border: 1px solid #7f7f7f;
    border-right: 0;
`;

const TaskButton = styled.button`
    display: flex;
    align-items: center;
    justify-content: center;
    width: 30px;
    height: 30px;
    background: ${(p) => (p.$on ? "#f7f7f7" : "#d2d2d2")};
    & + & { border-top: 1px solid #7f7f7f; }
`;

const CX = 350;
const CY = 401;
const R = 323;
const STEP = 360 / 57;

// degrees clockwise from twelve o'clock
const onCircle = (deg) => {
    const a = (deg * Math.PI) / 180;
    return [CX + R * Math.sin(a), CY - R * Math.cos(a)];
};

// the circle is tessellated, so points lie on the chords
const onChord = (deg) => {
    const k = Math.floor((deg - 2.5) / STEP);
    const t = (deg - 2.5) / STEP - k;
    const a = onCircle(2.5 + k * STEP);
    const b = onCircle(2.5 + (k + 1) * STEP);
    return [a[0] + (b[0] - a[0]) * t, a[1] + (b[1] - a[1]) * t];
};

const chordPath = (from, to) => {
    const pts = [onChord(from)];
    for (let k = Math.ceil((from - 2.5) / STEP); 2.5 + k * STEP < to; k++) {
        pts.push(onCircle(2.5 + k * STEP));
    }
    pts.push(onChord(to));
    return "M" + pts.map((p) => p[0].toFixed(1) + " " + p[1].toFixed(1)).join("L");
};

const dots = [
    8.7, 20.3, 33.2, 47.8, 61.9, 80.3, 91.7, 103, 115.3, 128.7, 143.8, 157, 168.8, 180, 191.6, 204,
    216.8, 232, 245.4, 257.5, 268.7, 280.3, 292.1, 304.7, 320.2, 333.1, 346, 357.1,
];

const centerLine = dots
    .map((d, i) => {
        const next = i + 1 < dots.length ? dots[i + 1] : dots[0] + 360;
        return chordPath(d - 0.4, d + 0.4) + chordPath(d + 1.1, next - 1.1);
    })
    .join("");

const SketchDrawing = () => (
    <Svg $w={700} $h={740} viewBox="0 0 700 740" fill="none" stroke="#000" strokeWidth="1.3" role="img" aria-label="Sketch1">
        <path d={centerLine} />
        <path d="M27 11v384M673 11v384" />
        <path d="M27 23.500h278M389 23.500h284" />
        <path d="M27 23.500l14-3v6zM673 23.500l-14-3v6z" fill="#000" stroke="none" />
        <ellipse cx="322" cy="24" rx="6.500" ry="8" />
        <path d="M327 12l-9 24" />
        <text x="333" y="31" fill="#000" stroke="none" fontFamily="Liberation Sans, Arial, sans-serif" fontSize="20" fontWeight="700">50.00</text>
        <path d="M346 401h9M350 397v9" />
        <path d="M350 400v-32M351 401h12" stroke="#f00" />
        <path d="M350 360l4 12h-8zM371 401l-12-4v8z" fill="#f00" stroke="none" />
        <rect x="344" y="409" width="12" height="12" fill="#0bc43c" stroke="none" />
        <path d="M356 409l-4 4M344 421l4-4M356 421l-4-4" strokeWidth="1" />
        <circle cx="350" cy="415.500" r="2" stroke="#033" fill="#7fd497" strokeWidth="1" />
    </Svg>
);

const TriadDrawing = () => (
    <Svg $w={90} $h={62} viewBox="0 0 90 62" aria-hidden="true">
        <rect x="40" y="11.500" width="28" height="5" fill="#f46a6a" stroke="#8c1616" />
        <path d="M66 8l13 6-13 6z" fill="#c81c1c" />
        <rect x="37" y="18" width="5" height="24" fill="#8080e8" stroke="#1a1a8a" />
        <path d="M33.500 40h12L39.500 51z" fill="#1a1ad0" />
        <circle cx="39.500" cy="14" r="6" fill="#174f1a" />
        <path d="M37 9l2.500 4L42 9M39.500 13v4" stroke="#2d9a32" fill="none" />
        <text x="79" y="18" fill="#c23" fontSize="12" fontFamily="Liberation Sans, Arial, sans-serif">X</text>
        <text x="36" y="61" fill="#22d" fontSize="12" fontFamily="Liberation Sans, Arial, sans-serif">Z</text>
    </Svg>
);

const taskTabs = [
    ["home", "Resources"], ["library", "Design library"], ["folder", "File explorer"], ["palette", "View palette"],
    ["globe", "Appearances"], ["props", "Custom properties"], ["forum", "Forum"],
];

const Graphics = () => (
    <Viewport>
        <SketchDrawing />
        <Triad>
            <TriadDrawing />
            <ViewName>*Top</ViewName>
        </Triad>
        <TaskPane>
            {taskTabs.map(([icon, label], i) => (
                <TaskButton key={icon} $on={i === 0} aria-label={label}><Glyph name={icon} w={18} /></TaskButton>
            ))}
        </TaskPane>
    </Viewport>
);

/* ---------- bottom bars ---------- */

const BottomTabs = styled.div`
    display: flex;
    height: 21px;
    padding-left: 27px;
    background: #f7f7f7;
    border-top: 1px solid #7f7f7f;
    border-bottom: 1px solid #7f7f7f;
`;

const NavButton = styled.button`
    display: flex;
    align-items: center;
    justify-content: center;
    width: 20px;
    background: #a9a9c2;
    border: 1px solid #8787a6;
`;

const StatusBar = styled.footer`
    display: flex;
    align-items: center;
    height: 24px;
    padding: 2px 0 0 1px;
    background: #e5e5e5;
    border-bottom: 2px solid #16232e;
    white-space: nowrap;
`;

const StatusText = styled.span`
    flex: ${(p) => (p.$w ? "none" : 1)};
    ${(p) => p.$w && css`width: ${p.$w}px;`}
    line-height: 20px;
`;

const navPaths = [
    ["First", "M2 1v8M9 1v8L4 5z"],
    ["Previous", "M8 1v8L3 5z"],
    ["Next", "M3 1v8l5-4z"],
    ["Last", "M9 1v8M2 1v8l5-4z"],
];

const App = () => (
    <Page>
        <GlobalStyle />
        <TopBar />
        <CommandManager />
        <Tabs />
        <Workspace>
            <FeatureTree />
            <Graphics />
        </Workspace>
        <BottomTabs>
            {navPaths.map(([label, d]) => (
                <NavButton key={label} aria-label={label}>
                    <Svg $w={10} viewBox="0 0 11 10" fill="#77779a" stroke="#77779a"><path d={d} /></Svg>
                </NavButton>
            ))}
            <Tab $bottom $on $w={77}>Model</Tab>
            <Tab $bottom $w={89}>3D Views</Tab>
            <Tab $bottom $w={144}>Motion Study 1</Tab>
        </BottomTabs>
        <StatusBar>
            <StatusText>SOLIDWORKS Premium 2020 SP0.0</StatusText>
            <StatusText $w={99}>-29.60mm</StatusText>
            <StatusText $w={69}>18.35mm</StatusText>
            <StatusText $w={75}>0.00mm</StatusText>
            <StatusText $w={105}>Fully Defined</StatusText>
            <StatusText $w={130}>Editing Sketch1</StatusText>
            <StatusText $w={91}><Glyph name="warn" w={16} /></StatusText>
            <StatusText $w={63}>MMGS</StatusText>
            <StatusText $w={33}><Caret up /></StatusText>
            <Glyph name="tag" w={17} />
        </StatusBar>
    </Page>
);

export default App;
